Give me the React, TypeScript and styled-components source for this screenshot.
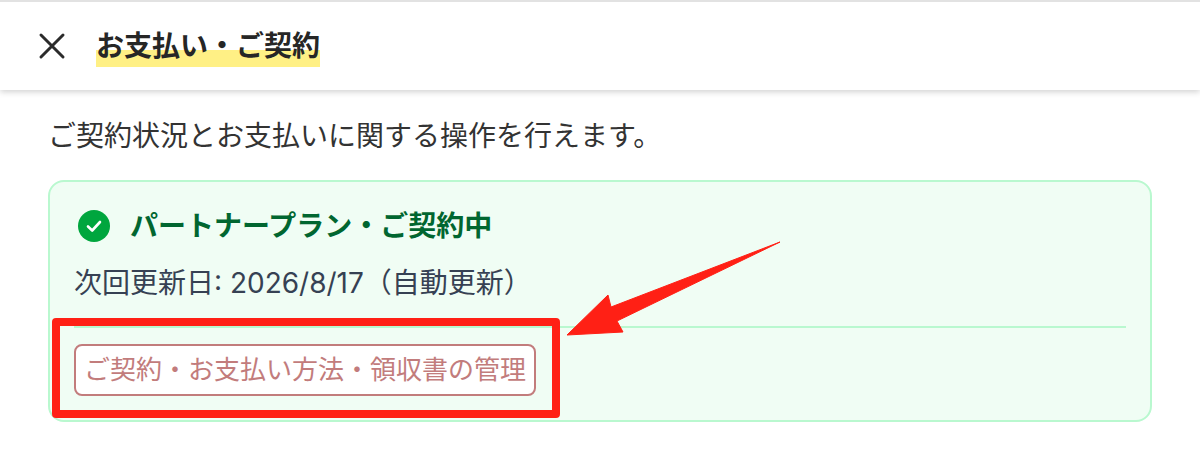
import styled, { createGlobalStyle } from "styled-components";

const GlobalStyle = createGlobalStyle`
  html, body {
    margin: 0;
    padding: 0;
    background: #fff;
  }
  body {
    font-family: "Inter", "Noto Sans CJK JP", sans-serif;
  }
`;

const Page = styled.div`
  position: relative;
  width: 1200px;
  height: 466px;
  overflow: hidden;
  background: #fff;
  border-top: 2px solid #e2e2e2;
  box-sizing: border-box;
`;

const Header = styled.header`
  display: flex;
  align-items: center;
  gap: 29px;
  height: 88px;
  padding: 0 37px;
  box-sizing: border-box;
  background: #fff;
  box-shadow: 0 2px 6px rgba(0, 0, 0, 0.18);
`;

const CloseIcon = styled.svg`
  width: 30px;
  height: 30px;
  flex: none;
`;

const Title = styled.h1`
  margin: 0;
  font-size: 28px;
  line-height: 44px;
  font-weight: 700;
  color: #262626;
  background: linear-gradient(
    transparent 26px,
    #fff085 26px,
    #fff085 43px,
    transparent 43px
  );
`;

const Content = styled.main`
  padding: 26px 48px 0;
`;

const Lead = styled.p`
  margin: 0 0 24px;
  font-size: 28px;
  line-height: 40px;
  color: #333;
`;

const Card = styled.section`
  box-sizing: border-box;
  height: 242px;
  padding: 24px 24px 0;
  background: #f0fdf4;
  border: 2px solid #b9f8cf;
  border-radius: 16px;
`;

const StatusRow = styled.div`
  display: flex;
  align-items: center;
  gap: 20px;
  padding-left: 4px;
  height: 40px;
`;

const CheckIcon = styled.svg`
  width: 32px;
  height: 32px;
  flex: none;
`;

const StatusText = styled.h2`
  margin: 0;
  font-size: 28px;
  line-height: 40px;
  font-weight: 700;
  color: #016630;
`;

const Renewal = styled.p`
  margin: 19px 0 0;
  font-size: 28px;
  line-height: 36px;
  color: #364153;
`;

const Divider = styled.hr`
  margin: 25px 0 0;
  border: 0;
  height: 2px;
  background: #b9f8cf;
`;

const ManageButton = styled.button`
  display: block;
  box-sizing: border-box;
  margin-top: 16px;
  width: 462px;
  height: 52px;
  padding: 0;
  background: #fff;
  border: 2px solid #c27c7c;
  border-radius: 8px;
  font-family: inherit;
  font-size: 26px;
  line-height: 48px;
  color: #c27c7c;
  cursor: pointer;
`;

const Highlight = styled.div`
  position: absolute;
  left: 52px;
  top: 316px;
  width: 508px;
  height: 100px;
  box-sizing: border-box;
  border: 8px solid #ff2015;
  border-radius: 4px;
`;

const Arrow = styled.svg`
  position: absolute;
  left: 560px;
  top: 236px;
  width: 230px;
  height: 110px;
`;

export default function App() {
  return (
    <Page>
      <GlobalStyle />
      <Header>
        <CloseIcon viewBox="0 0 30 30" fill="none">
          <path
            d="M4 4 L26 26 M26 4 L4 26"
            stroke="#2b2b2b"
            strokeWidth="3"
            strokeLinecap="round"
          />
        </CloseIcon>
        <Title>お支払い・ご契約</Title>
      </Header>
      <Content>
        <Lead>ご契約状況とお支払いに関する操作を行えます。</Lead>
        <Card>
          <StatusRow>
            <CheckIcon viewBox="0 0 32 32">
              <circle cx="16" cy="16" r="16" fill="#00a63e" />
              <path
                d="M10 16.5 L14.2 20.5 L22 12"
                fill="none"
                stroke="#fff"
                strokeWidth="2.6"
                strokeLinecap="round"
                strokeLinejoin="round"
              />
            </CheckIcon>
            <StatusText>パートナープラン・ご契約中</StatusText>
          </StatusRow>
          <Renewal>次回更新日: 2026/8/17（自動更新）</Renewal>
          <Divider />
          <ManageButton>ご契約・お支払い方法・領収書の管理</ManageButton>
        </Card>
      </Content>
      <Highlight />
      <Arrow viewBox="0 0 230 110">
        <path
          d="M7 97 L48 57 L51 69 L220 4 L57 83 L63 94 Z"
          fill="#ff2015"
          stroke="#ff2015"
          strokeWidth="1"
          strokeLinejoin="round"
        />
      </Arrow>
    </Page>
  );
}
